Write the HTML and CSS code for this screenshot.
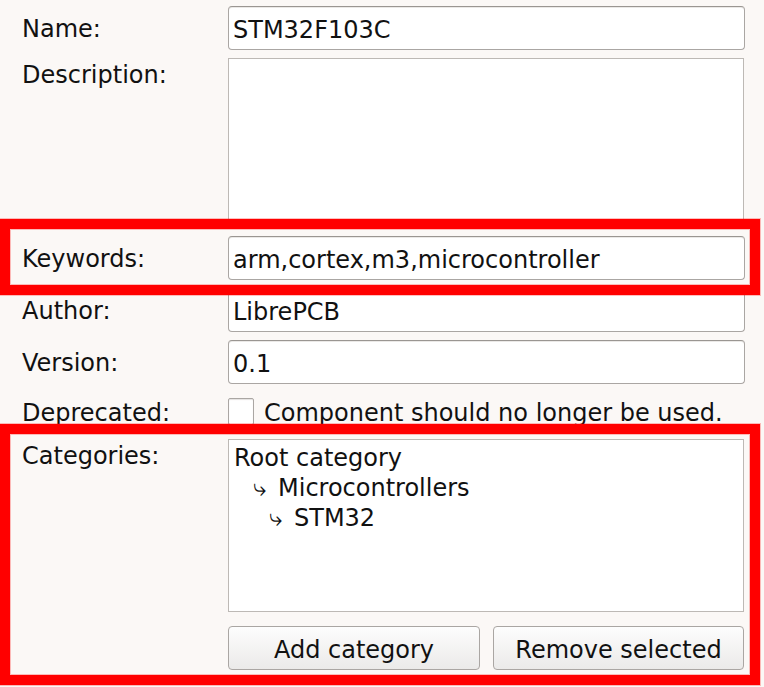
FILE: index.html
```html
<!DOCTYPE html>
<html lang="en">
<head>
<meta charset="utf-8">
<title>Component properties</title>
<link rel="stylesheet" href="styles.css">
</head>
<body>
<div class="form">
  <div class="lbl">Name:</div>
  <div class="input">STM32F103C</div>

  <div class="lbl lbl-top">Description:</div>
  <div class="textarea"></div>

  <div class="lbl">Keywords:</div>
  <div class="input">arm,cortex,m3,microcontroller</div>

  <div class="lbl">Author:</div>
  <div class="input">LibrePCB</div>

  <div class="lbl">Version:</div>
  <div class="input">0.1</div>

  <div class="lbl">Deprecated:</div>
  <div class="check-row">
    <span class="checkbox"></span>
    <span class="check-text">Component should no longer be used.</span>
  </div>

  <div class="lbl lbl-top">Categories:</div>
  <div class="cat-field">
    <div class="list">
      <div class="item">Root category</div>
      <div class="item lvl1"><span class="arrow">⤷</span>Microcontrollers</div>
      <div class="item lvl2"><span class="arrow">⤷</span>STM32</div>
    </div>
    <div class="buttons">
      <button class="btn">Add category</button>
      <button class="btn">Remove selected</button>
    </div>
  </div>
</div>
<div class="highlight hl-keywords"></div>
<div class="highlight hl-categories"></div>
</body>
</html>
```
FILE: styles.css
```css
html, body {
  margin: 0;
  padding: 0;
}
body {
  width: 764px;
  height: 687px;
  background: #fbf8f6;
  font-family: "DejaVu Sans", "Liberation Sans", sans-serif;
  font-size: 24px;
  color: #111;
  position: relative;
  overflow: hidden;
}
.form {
  display: grid;
  grid-template-columns: 206px 517px;
  grid-template-rows: 44px 170px 44px 44px 44px 39px auto;
  row-gap: 8px;
  padding: 6px 0 0 22px;
}
.lbl {
  line-height: 28px;
  align-self: center;
  white-space: nowrap;
  padding-top: 2px;
}
.lbl-top {
  align-self: start;
  margin-top: 2px;
  padding-top: 1px;
}
.input {
  box-sizing: border-box;
  height: 44px;
  display: flex;
  align-items: center;
  padding: 3px 4px 0 4px;
  line-height: 28px;
  background: #fff;
  border: 1px solid #aaa6a3;
  border-top-color: #9a9692;
  border-radius: 4px;
  box-shadow: inset 0 1px 0 #ebe9e7;
  white-space: nowrap;
}
.textarea {
  box-sizing: border-box;
  background: #fff;
  border: 1px solid #bdb9b5;
  width: 516px;
}
.check-row {
  display: flex;
  align-items: center;
  gap: 10px;
}
.checkbox {
  box-sizing: border-box;
  width: 26px;
  height: 27px;
  background: #fff;
  border: 1px solid #aaa6a3;
  border-radius: 2px;
  box-shadow: inset 0 1px 1px #e4e2e0;
  flex: none;
}
.check-text {
  line-height: 28px;
  white-space: nowrap;
  padding-top: 2px;
}
.cat-field {
  display: flex;
  flex-direction: column;
  gap: 14px;
}
.list {
  box-sizing: border-box;
  height: 173px;
  width: 516px;
  background: #fff;
  border: 1px solid #bdb9b5;
  padding: 3px 5px 1px 5px;
}
.item {
  line-height: 30px;
  white-space: nowrap;
}
.arrow {
  display: inline-block;
  width: 25px;
  font-size: 24px;
  vertical-align: 0;
}
.lvl1 {
  padding-left: 19px;
}
.lvl2 {
  padding-left: 35px;
}
.buttons {
  display: grid;
  grid-template-columns: 252px 251px;
  column-gap: 13px;
}
.btn {
  box-sizing: border-box;
  height: 44px;
  font: inherit;
  color: #111;
  line-height: 28px;
  padding: 3px 0 0 0;
  border: 1px solid #aaa6a3;
  border-radius: 4px;
  background: linear-gradient(#fdfdfd, #ebeae9);
}
.highlight {
  position: absolute;
  left: 0;
  width: 760px;
  box-sizing: border-box;
  border: 10px solid #ff0000;
  box-shadow: 0 0 0 1px rgba(255, 0, 0, 0.25), inset 0 0 0 1px rgba(255, 0, 0, 0.25);
  pointer-events: none;
}
.hl-keywords {
  top: 219px;
  height: 76px;
}
.hl-categories {
  top: 424px;
  height: 261px;
}
```
